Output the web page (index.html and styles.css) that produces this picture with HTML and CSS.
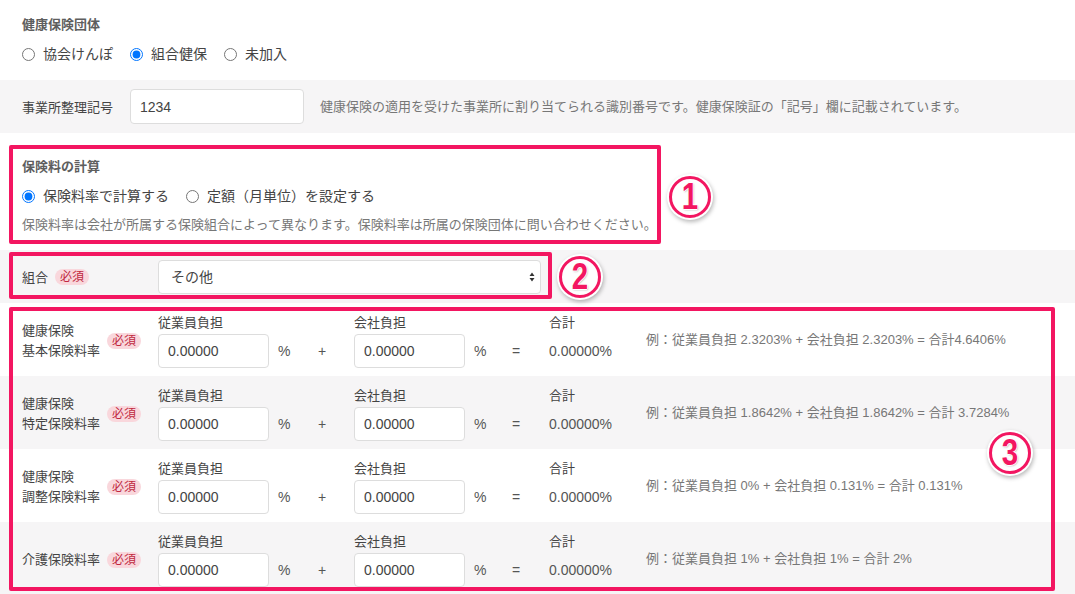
FILE: index.html
```html
<!DOCTYPE html>
<html lang="ja">
<head>
<meta charset="utf-8">
<title>健康保険</title>
<link rel="stylesheet" href="styles.css">
</head>
<body>
<div class="page">
  <section class="sec sec-org">
    <div class="title">健康保険団体</div>
    <div class="radios">
      <label class="radio"><input type="radio" name="org">協会けんぽ</label>
      <label class="radio"><input type="radio" name="org" checked>組合健保</label>
      <label class="radio"><input type="radio" name="org">未加入</label>
    </div>
  </section>

  <div class="row gray row-office">
    <div class="office-label">事業所整理記号</div>
    <input class="text office-input" type="text" value="1234">
    <span class="help">健康保険の適用を受けた事業所に割り当てられる識別番号です。健康保険証の「記号」欄に記載されています。</span>
  </div>

  <section class="sec sec-calc">
    <div class="title">保険料の計算</div>
    <div class="radios">
      <label class="radio"><input type="radio" name="calc" checked>保険料率で計算する</label>
      <label class="radio"><input type="radio" name="calc">定額（月単位）を設定する</label>
    </div>
    <div class="help">保険料率は会社が所属する保険組合によって異なります。保険料率は所属の保険団体に問い合わせください。</div>
  </section>

  <div class="row gray row-union">
    <div class="union-label"><span>組合</span><span class="badge">必須</span></div>
    <div class="select-wrap">
      <select class="select"><option>その他</option></select>
      <svg class="select-arrow" width="6" height="10" viewBox="0 0 6 10"><path d="M3 0.5 L5.5 4 H0.5 Z M3 9.5 L0.5 6 H5.5 Z" fill="#333"/></svg>
    </div>
  </div>

  <div class="rate-row">
    <div class="rate-label"><span class="rate-name">健康保険<br>基本保険料率</span><span class="badge">必須</span></div>
    <div class="field"><div class="field-lbl">従業員負担</div><input class="num" type="text" value="0.00000"></div>
    <span class="op pct">%</span><span class="op plus">+</span>
    <div class="field"><div class="field-lbl">会社負担</div><input class="num" type="text" value="0.00000"></div>
    <span class="op pct2">%</span><span class="op eq">=</span>
    <div class="field total"><div class="field-lbl">合計</div><div class="total-val">0.00000%</div></div>
    <div class="example">例：従業員負担 2.3203% + 会社負担 2.3203% = 合計4.6406%</div>
  </div>

  <div class="rate-row gray">
    <div class="rate-label"><span class="rate-name">健康保険<br>特定保険料率</span><span class="badge">必須</span></div>
    <div class="field"><div class="field-lbl">従業員負担</div><input class="num" type="text" value="0.00000"></div>
    <span class="op pct">%</span><span class="op plus">+</span>
    <div class="field"><div class="field-lbl">会社負担</div><input class="num" type="text" value="0.00000"></div>
    <span class="op pct2">%</span><span class="op eq">=</span>
    <div class="field total"><div class="field-lbl">合計</div><div class="total-val">0.00000%</div></div>
    <div class="example">例：従業員負担 1.8642% + 会社負担 1.8642% = 合計 3.7284%</div>
  </div>

  <div class="rate-row">
    <div class="rate-label"><span class="rate-name">健康保険<br>調整保険料率</span><span class="badge">必須</span></div>
    <div class="field"><div class="field-lbl">従業員負担</div><input class="num" type="text" value="0.00000"></div>
    <span class="op pct">%</span><span class="op plus">+</span>
    <div class="field"><div class="field-lbl">会社負担</div><input class="num" type="text" value="0.00000"></div>
    <span class="op pct2">%</span><span class="op eq">=</span>
    <div class="field total"><div class="field-lbl">合計</div><div class="total-val">0.00000%</div></div>
    <div class="example">例：従業員負担 0% + 会社負担 0.131% = 合計 0.131%</div>
  </div>

  <div class="rate-row gray">
    <div class="rate-label"><span class="rate-name">介護保険料率</span><span class="badge">必須</span></div>
    <div class="field"><div class="field-lbl">従業員負担</div><input class="num" type="text" value="0.00000"></div>
    <span class="op pct">%</span><span class="op plus">+</span>
    <div class="field"><div class="field-lbl">会社負担</div><input class="num" type="text" value="0.00000"></div>
    <span class="op pct2">%</span><span class="op eq">=</span>
    <div class="field total"><div class="field-lbl">合計</div><div class="total-val">0.00000%</div></div>
    <div class="example">例：従業員負担 1% + 会社負担 1% = 合計 2%</div>
  </div>

  <div class="anno-box box1"></div>
  <div class="anno-box box2"></div>
  <div class="anno-box box3"></div>
  <div class="anno-num num1"><span class="digit">1</span></div>
  <div class="anno-num num2"><span class="digit">2</span></div>
  <div class="anno-num num3"><span class="digit">3</span></div>
</div>
</body>
</html>
```

FILE: styles.css
```css
* { box-sizing: border-box; }

body {
  margin: 0;
  background: #fff;
  font-family: "Liberation Sans", "Noto Sans CJK JP", sans-serif;
  font-size: 13px;
  color: #555;
}

.page {
  position: relative;
  width: 1075px;
  height: 594px;
  overflow: hidden;
}

.gray { background: #f6f5f6; }

.sec { padding-left: 22px; }

.title {
  font-weight: bold;
  color: #5e5e5e;
  line-height: 20px;
}

.radios {
  display: flex;
  gap: 17px;
  font-size: 14px;
  color: #444;
  line-height: 20px;
}

.radio {
  display: flex;
  align-items: center;
  gap: 8px;
}

.radio input {
  margin: 0;
  width: 13px;
  height: 13px;
}

.sec-org {
  height: 80px;
  padding-top: 15px;
}

.sec-org .radios { margin-top: 9px; }

.row {
  display: flex;
  align-items: center;
  padding-left: 22px;
}

.row-office {
  height: 53px;
}

.office-label {
  width: 108px;
  color: #444;
}

.text,
.num,
.select {
  height: 34px;
  border: 1px solid #ddd;
  border-radius: 4px;
  background: #fff;
  font-family: "Liberation Sans", "Noto Sans CJK JP", sans-serif;
  font-size: 14px;
  color: #444;
  outline: none;
}

.office-input {
  width: 174px;
  height: 35px;
  padding: 0 9px;
}

.row-office .help { margin-left: 16px; }

.help {
  color: #777;
  line-height: 20px;
}

.sec-calc {
  height: 117px;
  padding-top: 24px;
}

.sec-calc .radios { margin-top: 9px; }
.sec-calc .help { margin-top: 9px; }

.row-union {
  height: 53px;
}

.union-label {
  width: 136px;
  display: flex;
  align-items: center;
  gap: 7px;
  color: #444;
}

.badge {
  display: inline-block;
  background: #f9d7dc;
  color: #c0283f;
  font-size: 12px;
  line-height: 16px;
  padding: 0 5px;
  border-radius: 8px;
}

.select-wrap {
  position: relative;
  width: 383px;
}

.select {
  width: 100%;
  appearance: none;
  -webkit-appearance: none;
  padding: 0 12px;
}

.select-arrow {
  position: absolute;
  right: 6px;
  top: 12px;
}

.rate-row {
  display: flex;
  align-items: flex-end;
  height: 73px;
  padding: 10px 0 8px 22px;
}

.rate-label {
  width: 136px;
  align-self: center;
  display: flex;
  align-items: center;
  gap: 7px;
  color: #444;
  line-height: 20px;
}

.field {
  width: 111px;
  display: flex;
  flex-direction: column;
  gap: 1px;
}

.field-lbl {
  line-height: 20px;
  color: #444;
}

.num {
  width: 111px;
  padding: 0 9px;
}

.op {
  font-size: 14px;
  line-height: 34px;
  color: #555;
}

.pct { margin-left: 9px; width: 40px; }
.plus { width: 36px; }
.pct2 { margin-left: 9px; width: 38px; }
.eq { width: 37px; }

.total { width: 97px; }

.total-val {
  font-size: 14px;
  line-height: 34px;
  color: #555;
}

.example {
  align-self: center;
  color: #777;
  line-height: 20px;
  margin-top: -2px;
}

/* annotations */
.anno-box {
  position: absolute;
  border: 4px solid #f31661;
  border-radius: 2px;
}

.box1 { left: 9px; top: 145px; width: 652px; height: 99px; }
.box2 { left: 9px; top: 252px; width: 543px; height: 47px; }
.box3 { left: 9px; top: 307px; width: 1046px; height: 284px; }

.anno-num {
  position: absolute;
  width: 42px;
  height: 42px;
  border: 3px solid #f31661;
  border-radius: 50%;
  background: rgba(255, 255, 255, 0.9);
  box-shadow: 0 0 0 2px #fff, 1px 2px 4px 2px rgba(0, 0, 0, 0.28);
  display: flex;
  align-items: center;
  justify-content: center;
}

.digit {
  display: inline-block;
  color: #f31661;
  font-family: "Liberation Sans", sans-serif;
  font-weight: bold;
  font-size: 36px;
  line-height: 36px;
  transform: scaleX(0.82);
  text-shadow: 1px 0 0 #fff, -1px 0 0 #fff, 0 1px 0 #fff, 0 -1px 0 #fff, 1px 1px 2px rgba(0, 0, 0, 0.35);
}

.num1 { left: 669px; top: 176px; }
.num2 { left: 559px; top: 256px; }
.num3 { left: 989px; top: 432px; }
```
